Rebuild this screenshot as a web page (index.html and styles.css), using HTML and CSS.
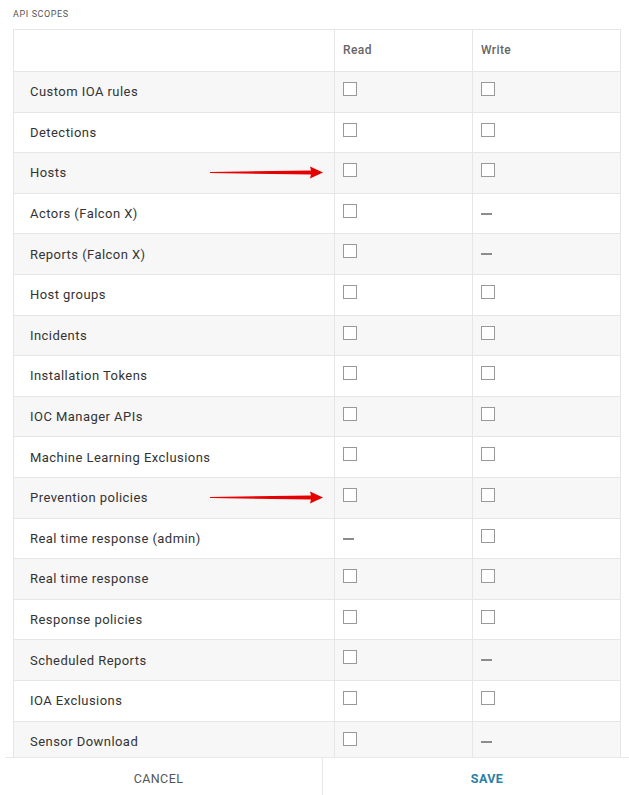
FILE: index.html
```html
<!DOCTYPE html>
<html>
<head>
<meta charset="utf-8">
<link rel="stylesheet" href="styles.css">
</head>
<body>
<div class="page">
  <div class="content">
    <div class="section-title">API SCOPES</div>
    <table class="scopes">
      <colgroup><col class="c1"><col class="c2"><col class="c3"></colgroup>
      <thead>
        <tr><th class="name"></th><th>Read</th><th>Write</th></tr>
      </thead>
      <tbody>
        <tr><td class="name">Custom IOA rules</td><td><span class="cb"></span></td><td><span class="cb"></span></td></tr>
        <tr><td class="name">Detections</td><td><span class="cb"></span></td><td><span class="cb"></span></td></tr>
        <tr><td class="name marked">Hosts<svg class="arrow" viewBox="0 0 113 13" width="113" height="13"><path d="M0 5.9 L101 4.4 L100 0.5 L113 6.5 L100 12.5 L101 8.4 L0 7.1 Z" fill="#e60000"/></svg></td><td><span class="cb"></span></td><td><span class="cb"></span></td></tr>
        <tr><td class="name">Actors (Falcon X)</td><td><span class="cb"></span></td><td><span class="dash"></span></td></tr>
        <tr><td class="name">Reports (Falcon X)</td><td><span class="cb"></span></td><td><span class="dash"></span></td></tr>
        <tr><td class="name">Host groups</td><td><span class="cb"></span></td><td><span class="cb"></span></td></tr>
        <tr><td class="name">Incidents</td><td><span class="cb"></span></td><td><span class="cb"></span></td></tr>
        <tr><td class="name">Installation Tokens</td><td><span class="cb"></span></td><td><span class="cb"></span></td></tr>
        <tr><td class="name">IOC Manager APIs</td><td><span class="cb"></span></td><td><span class="cb"></span></td></tr>
        <tr><td class="name">Machine Learning Exclusions</td><td><span class="cb"></span></td><td><span class="cb"></span></td></tr>
        <tr><td class="name marked">Prevention policies<svg class="arrow" viewBox="0 0 113 13" width="113" height="13"><path d="M0 5.9 L101 4.4 L100 0.5 L113 6.5 L100 12.5 L101 8.4 L0 7.1 Z" fill="#e60000"/></svg></td><td><span class="cb"></span></td><td><span class="cb"></span></td></tr>
        <tr><td class="name">Real time response (admin)</td><td><span class="dash"></span></td><td><span class="cb"></span></td></tr>
        <tr><td class="name">Real time response</td><td><span class="cb"></span></td><td><span class="cb"></span></td></tr>
        <tr><td class="name">Response policies</td><td><span class="cb"></span></td><td><span class="cb"></span></td></tr>
        <tr><td class="name">Scheduled Reports</td><td><span class="cb"></span></td><td><span class="dash"></span></td></tr>
        <tr><td class="name">IOA Exclusions</td><td><span class="cb"></span></td><td><span class="cb"></span></td></tr>
        <tr><td class="name">Sensor Download</td><td><span class="cb"></span></td><td><span class="dash"></span></td></tr>
      </tbody>
    </table>
  </div>
  <div class="footer">
    <button class="btn cancel">CANCEL</button>
    <button class="btn save">SAVE</button>
  </div>
</div>
</body>
</html>
```
FILE: styles.css
```css
html, body {
  margin: 0;
  padding: 0;
  background: #fff;
}
body {
  font-family: Roboto, "Liberation Sans", sans-serif;
  color: #333;
}
.page {
  height: 795px;
  display: flex;
  flex-direction: column;
  overflow: hidden;
}
.content {
  flex: 1;
  overflow: hidden;
  padding: 9px 10px 0 13px;
}
.section-title {
  font-size: 9px;
  letter-spacing: 0.6px;
  color: #555;
  line-height: 11px;
  height: 20px;
}
.scopes {
  width: 607px;
  border-collapse: collapse;
  table-layout: fixed;
}
.scopes col.c1 { width: 321px; }
.scopes col.c2 { width: 138px; }
.scopes col.c3 { width: 148px; }
.scopes th, .scopes td {
  border: 1px solid #e6e6e6;
  padding: 0 0 0 8px;
  text-align: left;
}
.scopes thead tr { height: 42px; }
.scopes th {
  font-size: 12px;
  font-weight: 500;
  color: #666;
  letter-spacing: 0.4px;
  vertical-align: middle;
  padding-bottom: 2px;
}
.scopes tbody tr { height: 40.6px; }
.scopes tbody tr:nth-child(odd) { background: #f7f7f7; }
.scopes td {
  vertical-align: top;
  padding-top: 10px;
  box-sizing: border-box;
}
.scopes td.name {
  vertical-align: middle;
  padding: 0 0 0 16px;
  font-size: 13px;
  letter-spacing: 0.45px;
  color: #333;
}
.scopes td.marked {
  position: relative;
}
.arrow {
  position: absolute;
  left: 196px;
  top: 50%;
  margin-top: -7px;
  display: block;
}
.cb {
  display: block;
  width: 12px;
  height: 12px;
  border: 1px solid #999;
  background: #fff;
}
.dash {
  display: block;
  width: 11px;
  height: 2px;
  background: #8c8c8c;
  margin-top: 9px;
}
.footer {
  height: 37px;
  flex: none;
  display: flex;
  margin-left: 5px;
  border-top: 1px solid #e8e8e8;
  background: #fff;
}
.btn {
  border: none;
  background: #fff;
  font-family: Roboto, "Liberation Sans", sans-serif;
  font-size: 12.5px;
  letter-spacing: 0.4px;
  cursor: pointer;
  padding: 3px 0 0 0;
}
.cancel {
  width: 318px;
  border-right: 1px solid #e8e8e8;
  color: #555;
  padding-right: 10px;
}
.save {
  flex: 1;
  color: #2b80a3;
  font-weight: bold;
  padding-left: 22px;
}
```
